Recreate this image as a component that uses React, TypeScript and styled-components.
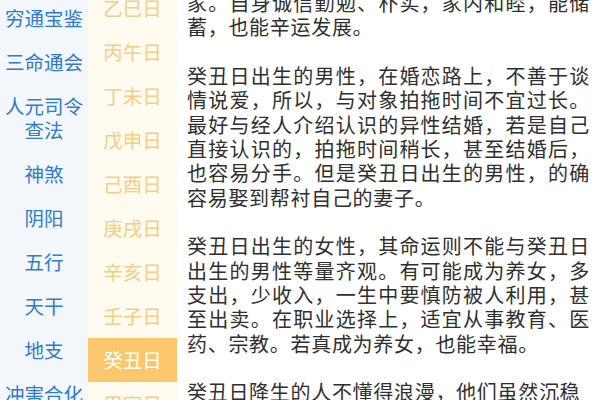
import React from "react";
import styled, { createGlobalStyle } from "styled-components";

const GlobalStyle = createGlobalStyle`
	html, body {
		margin: 0;
		padding: 0;
		background: #ffffff;
	}
	body {
		font-family: "Noto Sans CJK SC", "Noto Sans", sans-serif;
	}
`;

const categories = [
	["穷通宝鉴"],
	["三命通会"],
	["人元司令", "查法"],
	["神煞"],
	["阴阳"],
	["五行"],
	["天干"],
	["地支"],
	["冲害合化"],
];

const days = [
	"乙巳日",
	"丙午日",
	"丁未日",
	"戊申日",
	"己酉日",
	"庚戌日",
	"辛亥日",
	"壬子日",
	"癸丑日",
	"甲寅日",
];

const paragraphs = [
	"家。自身诚信勤勉、朴实，家内和睦，能储蓄，也能辛运发展。",
	"癸丑日出生的男性，在婚恋路上，不善于谈情说爱，所以，与对象拍拖时间不宜过长。最好与经人介绍认识的异性结婚，若是自己直接认识的，拍拖时间稍长，甚至结婚后，也容易分手。但是癸丑日出生的男性，的确容易娶到帮衬自己的妻子。",
	"癸丑日出生的女性，其命运则不能与癸丑日出生的男性等量齐观。有可能成为养女，多支出，少收入，一生中要慎防被人利用，甚至出卖。在职业选择上，适宜从事教育、医药、宗教。若真成为养女，也能幸福。",
	"癸丑日降生的人不懂得浪漫，他们虽然沉稳",
];

const Screen = styled.div`
	display: flex;
	width: 600px;
	height: 400px;
	overflow: hidden;
`;

const CategoryColumn = styled.div`
	flex: 0 0 88px;
	background: #f3f7fc;
	overflow: hidden;
`;

const CategoryList = styled.ul`
	list-style: none;
	margin: -4px 0 0;
	padding: 0;
`;

const CategoryItem = styled.li`
	padding: 10px 0;
	text-align: center;
	font-size: 19.5px;
	line-height: 24px;
	color: #2e7bd0;
	white-space: nowrap;
`;

const DayColumn = styled.div`
	flex: 0 0 89px;
	background: #fffbf1;
	overflow: hidden;
`;

const DayList = styled.ul`
	list-style: none;
	margin: -14.5px 0 0;
	padding: 0;
`;

const DayItem = styled.li<{ $active?: boolean }>`
	height: 44px;
	display: flex;
	align-items: center;
	justify-content: center;
	font-size: 19.5px;
	color: ${(p) => (p.$active ? "#ffffff" : "#f4cf80")};
	background: ${(p) => (p.$active ? "#fbc66c" : "transparent")};
`;

const Content = styled.div`
	flex: 1;
	padding: 0 10px 0 10px;
	overflow: hidden;
`;

const Article = styled.div`
	margin-top: -9px;
`;

const Paragraph = styled.p`
	margin: 0 0 24px;
	font-size: 20px;
	line-height: 24.4px;
	letter-spacing: 0.7px;
	color: #2f2f2f;
	text-align: justify;
`;

export default function App() {
	return (
		<>
			<GlobalStyle />
			<Screen>
				<CategoryColumn>
					<CategoryList>
						{categories.map((lines) => (
							<CategoryItem key={lines.join("")}>
								{lines.map((line, i) => (
									<div key={i}>{line}</div>
								))}
							</CategoryItem>
						))}
					</CategoryList>
				</CategoryColumn>
				<DayColumn>
					<DayList>
						{days.map((day) => (
							<DayItem key={day} $active={day === "癸丑日"}>
								{day}
							</DayItem>
						))}
					</DayList>
				</DayColumn>
				<Content>
					<Article>
						{paragraphs.map((text, i) => (
							<Paragraph key={i}>{text}</Paragraph>
						))}
					</Article>
				</Content>
			</Screen>
		</>
	);
}
